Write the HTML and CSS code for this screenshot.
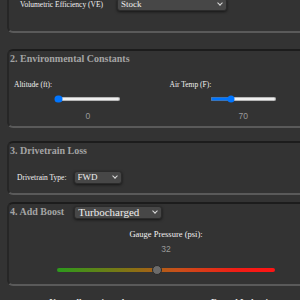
FILE: index.html
```html
<!doctype html>
<html lang="en">
    <head>
        <meta charset="UTF-8" />
        <meta name="viewport" content="width=device-width, initial-scale=1.0" />
        <title>Horsepower Calculator</title>
        <link rel="stylesheet" href="styles.css">
    </head>
    <body>
        <main class="calc">
            <!-- 1. Engine -->
            <section class="card card-engine">
                <h3 class="card-title">1. Engine Basics</h3>
                <div class="field-row">
                    <label for="ve">Volumetric Efficiency (VE)</label>
                    <span class="select-wrap">
                        <select id="ve" class="select select-ve">
                            <option>Stock</option>
                            <option>Mild Build</option>
                            <option>Race Build</option>
                        </select>
                    </span>
                </div>
            </section>

            <!-- 2. Environment -->
            <section class="card card-env">
                <h3 class="card-title">2. Environmental Constants</h3>
                <div class="env-grid">
                    <div class="env-field">
                        <label for="altitude">Altitude (ft):</label>
                        <div class="env-control">
                            <input type="range" id="altitude" class="env-slider" min="0" max="10000" value="0" />
                            <div class="env-value">0</div>
                        </div>
                    </div>
                    <div class="env-field">
                        <label for="airTemp">Air Temp (F):</label>
                        <div class="env-control">
                            <input type="range" id="airTemp" class="env-slider" min="0" max="240" value="70" />
                            <div class="env-value">70</div>
                        </div>
                    </div>
                </div>
            </section>

            <!-- 3. Drivetrain -->
            <section class="card card-drive">
                <h3 class="card-title">3. Drivetrain Loss</h3>
                <div class="field-row">
                    <label for="drivetrain">Drivetrain Type:</label>
                    <span class="select-wrap">
                        <select id="drivetrain" class="select select-drive">
                            <option>FWD</option>
                            <option>RWD</option>
                            <option>AWD</option>
                        </select>
                    </span>
                </div>
            </section>

            <!-- 4. Boost -->
            <section class="card card-boost">
                <div class="boost-head">
                    <h3 class="card-title">4. Add Boost</h3>
                    <span class="select-wrap">
                        <select id="boostType" class="select select-boost">
                            <option>Turbocharged</option>
                            <option>Supercharged</option>
                            <option>None</option>
                        </select>
                    </span>
                </div>
                <div class="boost-body">
                    <label for="boost" class="boost-label">Gauge Pressure (psi):</label>
                    <div class="env-value boost-value">32</div>
                    <input type="range" id="boost" class="boost-slider" min="0" max="70" value="32" />
                </div>
            </section>

            <!-- Results -->
            <section class="results">
                <div class="result">Naturally aspirated</div>
                <div class="result">Forced Induction</div>
            </section>
        </main>
    </body>
</html>
```

FILE: styles.css
```css
/* Basic styling */
body {
    margin: 0;
    background-color: #333333;
    font-family: "Liberation Serif", serif;
    color: #f2f2f2;
    overflow: hidden;
}
.calc {
    width: 318px;
    margin: -31px 0 0 7px;
}

/* Cards */
.card {
    border-top: 2px solid #1c1c1c;
    border-left: 2px solid #262626;
    border-right: 2px solid #262626;
    border-bottom: 2px solid #5a5a5a;
    border-radius: 6px;
    padding: 1px 0 5px;
}
.card-engine {
    margin-bottom: 16px;
}
.card-env {
    margin-bottom: 13px;
}
.card-drive {
    margin-bottom: 7px;
}
.card-title {
    margin: 0 0 0 1px;
    font-size: 10px;
    line-height: 14px;
    font-weight: bold;
    color: #a4a4a4;
}
label {
    font-size: 7.5px;
    line-height: 10px;
    color: #f2f2f2;
}

/* Label + select rows */
.field-row {
    display: flex;
    align-items: center;
    gap: 7px;
    margin: 13px 0 4px 8px;
}
.card-engine .field-row {
    gap: 14px;
    margin: 12px 0 15px 11px;
}

/* Selects */
.select-wrap {
    position: relative;
    display: inline-block;
}
.select-wrap::after {
    content: "";
    position: absolute;
    right: 5px;
    top: 3px;
    width: 3px;
    height: 3px;
    border-right: 1.2px solid #dddddd;
    border-bottom: 1.2px solid #dddddd;
    transform: rotate(45deg);
    pointer-events: none;
}
.select {
    appearance: none;
    display: block;
    height: 13px;
    margin: 0;
    padding: 0 12px 0 3px;
    background-color: #474747;
    color: #eeeeee;
    border: 1px solid #2b2b2b;
    border-radius: 3px;
    box-shadow: 0 1px 3px rgba(0, 0, 0, 0.6);
    font-family: "Liberation Serif", serif;
    font-size: 9px;
    line-height: 11px;
}
.select-ve {
    width: 110px;
}
.select-drive {
    width: 48px;
}
.select-boost {
    width: 88px;
    font-size: 11px;
}

/* Environment sliders */
.env-grid {
    display: grid;
    grid-template-columns: 1fr 1fr;
    gap: 8px;
    margin: 14px 6px 0 5px;
}
.env-field label {
    display: block;
}
.env-control {
    display: flex;
    flex-direction: column;
    align-items: center;
    margin-top: 5px;
}
.env-slider {
    zoom: 0.52;
    margin: 0;
}
.env-value {
    margin-top: 8px;
    font-family: "Liberation Sans", sans-serif;
    font-size: 8.5px;
    line-height: 10px;
    color: #9a9a9a;
}

/* Boost */
.boost-head {
    display: flex;
    align-items: center;
    gap: 10px;
}
.boost-body {
    display: flex;
    flex-direction: column;
    align-items: center;
    margin-bottom: 3px;
}
.boost-label {
    margin-top: 10px;
    font-size: 8.5px;
    line-height: 11px;
}
.boost-value {
    margin-top: 4px;
}
.boost-slider {
    appearance: none;
    width: 218px;
    height: 12px;
    margin: 10px 0 0;
    background: transparent;
}
.boost-slider::-webkit-slider-runnable-track {
    height: 4px;
    border-radius: 2px;
    background: linear-gradient(90deg, #2c9a1c 0%, #8a7014 35%, #c8501a 55%, #f01e16 82%, #ff1414 100%);
}
.boost-slider::-webkit-slider-thumb {
    appearance: none;
    width: 10px;
    height: 10px;
    margin-top: -3px;
    border-radius: 50%;
    background-color: #6b6b6b;
    border: 1px solid #2a2a2a;
}

/* Results */
.results {
    display: grid;
    grid-template-columns: 1fr 1fr;
    gap: 8px;
    margin: 9px 6px 0 5px;
}
.result {
    text-align: center;
    font-size: 9px;
    line-height: 14px;
    font-weight: bold;
    color: #e6e6e6;
}
```
